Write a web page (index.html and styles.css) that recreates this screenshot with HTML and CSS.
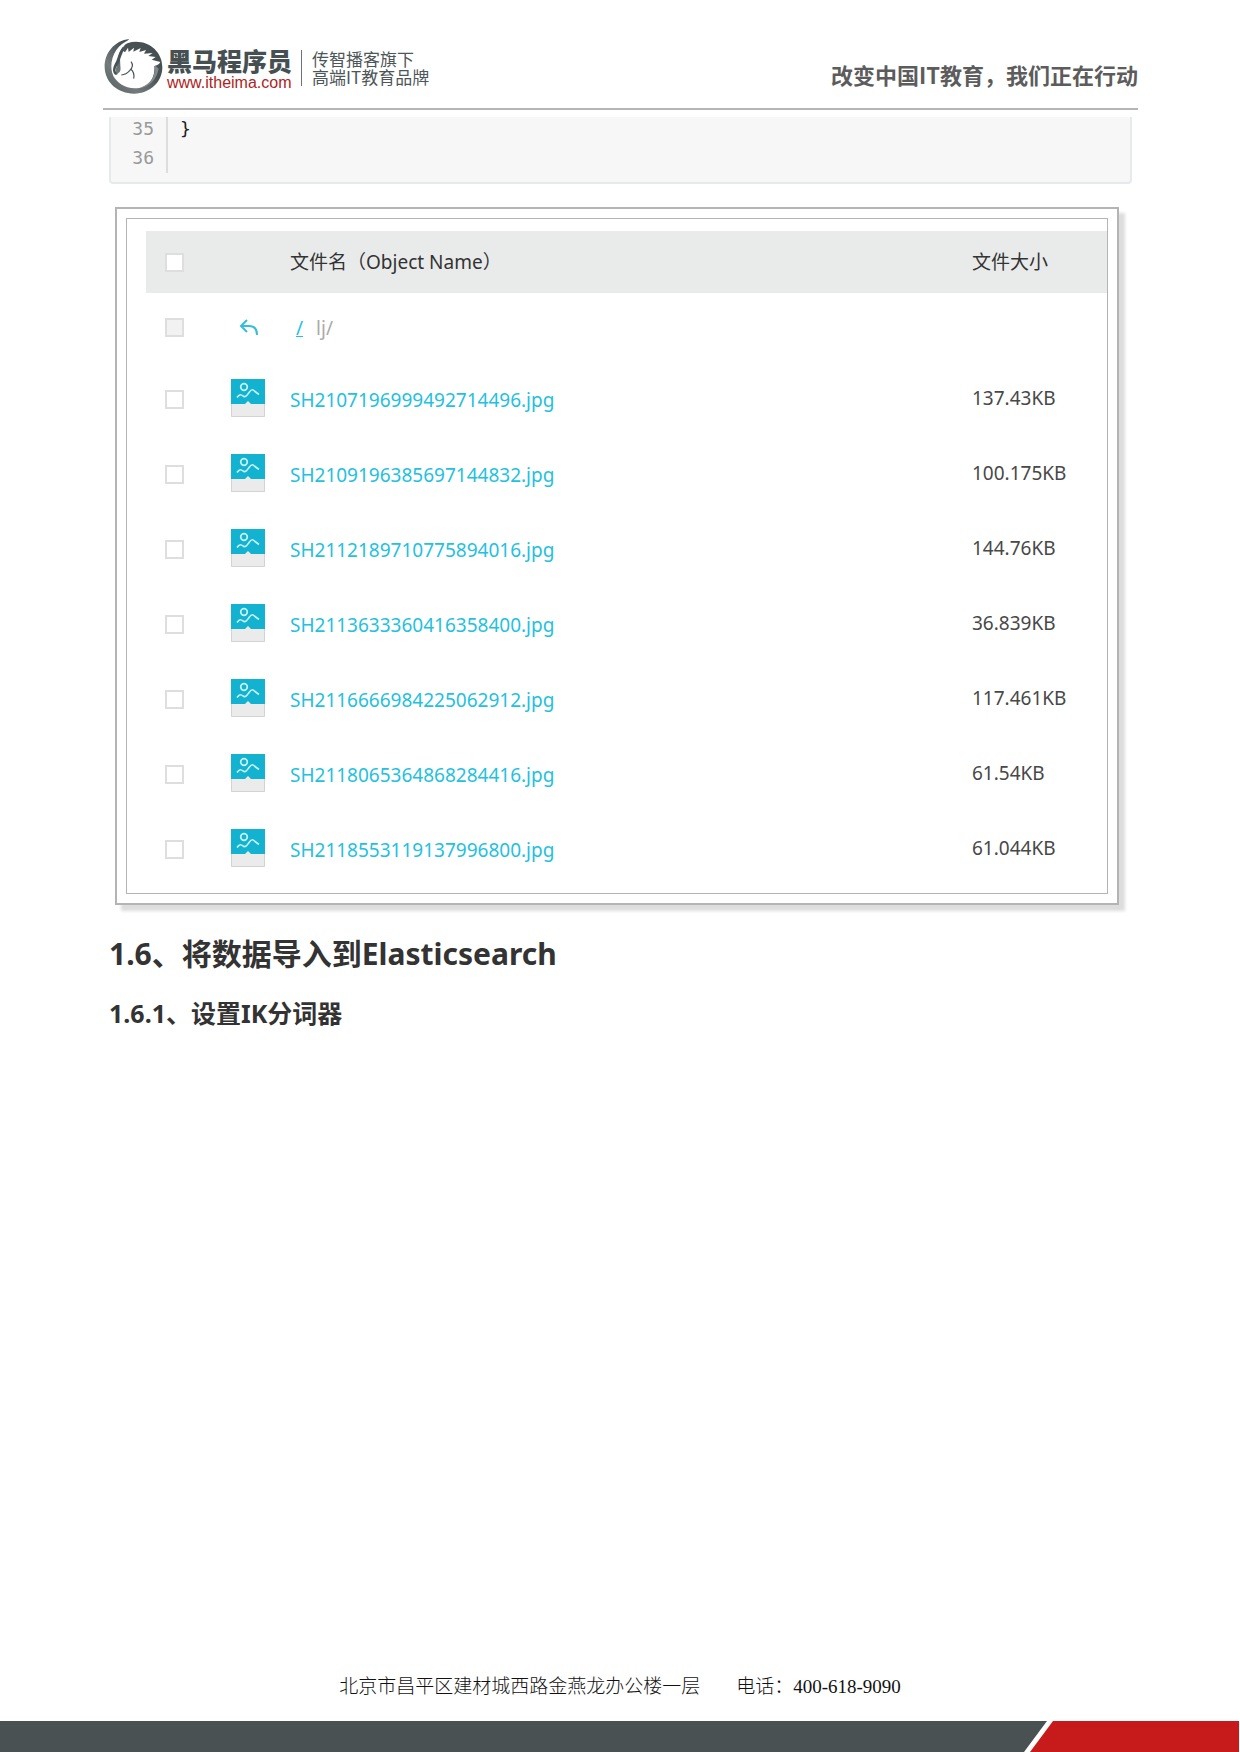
FILE: index.html
```html
<!DOCTYPE html>
<html lang="zh-CN">
<head>
<meta charset="utf-8">
<meta name="viewport" content="width=device-width, initial-scale=1">
<title>将数据导入到Elasticsearch</title>
<link rel="stylesheet" href="styles.css">
</head>
<body>
<svg class="sprite" aria-hidden="true">
  <symbol id="picture" viewBox="0 0 34 38">
    <path fill="#ebebeb" d="M0 24h34v14H0z"/>
    <path fill="none" stroke="#d3d3d3" d="M.5 25v12.500h33V25"/>
    <path fill="#12b2d0" d="M0 0h34v25H0z"/>
    <path fill="#ebebeb" d="M14 25l3-3 3 3z"/>
    <g fill="none" stroke="#c5f1f7" stroke-width="1.700"><circle cx="13" cy="8" r="3.300"/><path d="M6 18.500c3-4 4-3 7-1 2 1 3-1 5-4 3-4 4-3 6-1l4 3"/></g>
  </symbol>
</svg>
<header class="header">
  <div class="brand">
    <svg class="emblem" viewBox="28 23 177 168" role="img" aria-label="黑马程序员">
      <defs><linearGradient id="ring" x1="0" y1="1" x2="1" y2="0"><stop offset="0" stop-color="#50595b"/><stop offset=".3" stop-color="#737b7d"/><stop offset=".6" stop-color="#495254"/><stop offset="1" stop-color="#434d4e"/></linearGradient></defs>
      <path fill="url(#ring)" d="M104 26C59 31 29 68 30 111c1 46 40 79 88 79 49 0 85-36 85-79 0-44-35-77-79-77-17 0-32 5-43 14z"/>
      <path fill="#fff" d="M104 29C72 40 50 72 50 108c0 14 3 24 9 33l9-46c3-20 8-34 20-48z"/>
      <path fill="#fff" d="M76 84l7-24 8 6 9-14 2 13 16-13-2 12 22-11-4 12 20-6-6 11 26-2-13 9 22 3-12 8 26 7c-4 8-11 11-18 12 3 41-20 67-58 67-32 0-55-17-66-39l12-2 4-5c8-4 7-13 6-22z"/>
      <path fill="#495254" d="M84 50c-14 18-13 30-21 46-7 13-12 26-3 36l7-2-5-8 2-11c13-16 13-33 24-52z"/>
      <path fill="none" stroke="#495254" stroke-width="3.500" d="M109 94c8 10 3 20-4 27-7 8-14 12-25 13M108 116c10 8 11 19 9 29"/>
      <path fill="#838a8b" d="M181 105c2 34-13 58-47 68 27-2 52-24 58-58z"/>
    </svg>
    <div class="brand-text">
      <strong class="brand-name">黑马程序员</strong>
      <a class="brand-url" href="#">www.itheima.com</a>
    </div>
    <p class="tagline">传智播客旗下<br>高端IT教育品牌</p>
  </div>
  <p class="slogan">改变中国IT教育，我们正在行动</p>
</header>
<main class="content">
  <div class="code">
    <div class="gutter">35<br>36</div>
    <pre class="source">}</pre>
  </div>
  <figure class="frame">
    <div class="frame-inner">
      <table class="files">
        <colgroup><col class="col-check"><col class="col-icon"><col><col class="col-size"></colgroup>
        <thead>
          <tr><th><input type="checkbox" aria-label="全选"></th><th></th><th>文件名（Object Name）</th><th>文件大小</th></tr>
        </thead>
        <tbody>
          <tr class="up">
            <td><input type="checkbox" aria-label="lj/" disabled></td>
            <td><svg class="back" viewBox="0 0 20 18" aria-hidden="true"><path d="M8 1L2 7l6 6M2 7h8c6 0 8 4 8 9" fill="none" stroke="#35bddb" stroke-width="2"/></svg></td>
            <td class="path"><a href="#">/</a><span>lj/</span></td><td></td>
          </tr>
          <tr><td><input type="checkbox" aria-label="SH2107196999492714496.jpg"></td><td><svg class="picture"><use href="#picture"/></svg></td><td><a href="#">SH2107196999492714496.jpg</a></td><td>137.43KB</td></tr>
          <tr><td><input type="checkbox" aria-label="SH2109196385697144832.jpg"></td><td><svg class="picture"><use href="#picture"/></svg></td><td><a href="#">SH2109196385697144832.jpg</a></td><td>100.175KB</td></tr>
          <tr><td><input type="checkbox" aria-label="SH2112189710775894016.jpg"></td><td><svg class="picture"><use href="#picture"/></svg></td><td><a href="#">SH2112189710775894016.jpg</a></td><td>144.76KB</td></tr>
          <tr><td><input type="checkbox" aria-label="SH2113633360416358400.jpg"></td><td><svg class="picture"><use href="#picture"/></svg></td><td><a href="#">SH2113633360416358400.jpg</a></td><td>36.839KB</td></tr>
          <tr><td><input type="checkbox" aria-label="SH2116666984225062912.jpg"></td><td><svg class="picture"><use href="#picture"/></svg></td><td><a href="#">SH2116666984225062912.jpg</a></td><td>117.461KB</td></tr>
          <tr><td><input type="checkbox" aria-label="SH2118065364868284416.jpg"></td><td><svg class="picture"><use href="#picture"/></svg></td><td><a href="#">SH2118065364868284416.jpg</a></td><td>61.54KB</td></tr>
          <tr><td><input type="checkbox" aria-label="SH2118553119137996800.jpg"></td><td><svg class="picture"><use href="#picture"/></svg></td><td><a href="#">SH2118553119137996800.jpg</a></td><td>61.044KB</td></tr>
        </tbody>
      </table>
    </div>
  </figure>
  <h2>1.6、将数据导入到Elasticsearch</h2>
  <h3>1.6.1、设置IK分词器</h3>
</main>
<footer class="footer">
  <address class="contact"><span>北京市昌平区建材城西路金燕龙办公楼一层</span><span>电话：400-618-9090</span></address>
  <div class="bar"><div class="bar-dark"></div><div class="bar-red"></div></div>
</footer>
</body>
</html>
```

FILE: styles.css
```css
* { box-sizing: border-box; }
body {
  margin: 0;
  min-height: 100vh;
  display: flex;
  flex-direction: column;
  background: #fff;
  color: #333;
  font-family: "Noto Sans", "Noto Sans CJK SC", sans-serif;
}
p, h2, h3, figure, pre { margin: 0; }
a { text-decoration: none; }
.sprite { position: absolute; width: 0; height: 0; }

.header {
  display: flex;
  justify-content: space-between;
  align-items: flex-start;
  height: 110px;
  margin: 0 102px 0 103px;
  padding-top: 38px;
  border-bottom: 2px solid #b5b5b5;
  font-family: "Noto Sans CJK SC", sans-serif;
}
.brand { display: flex; align-items: flex-start; padding-left: 1px; }
.emblem { width: 59px; height: 56px; margin-right: 4px; }
.brand-text { display: flex; flex-direction: column; padding-top: 8px; }
.brand-name { font-size: 25px; line-height: 28px; font-weight: 900; color: #465052; }
.brand-url {
  font-family: "Liberation Sans", sans-serif;
  font-size: 16px;
  line-height: 18px;
  color: #ae2421;
}
.tagline {
  margin: 12px 0 0 9px;
  padding-left: 10px;
  border-left: 1px solid #6b7375;
  font-size: 17px;
  line-height: 18px;
  font-weight: 400;
  color: #4d5658;
}
.slogan {
  padding-top: 20px;
  font-size: 22px;
  line-height: 32px;
  font-weight: 700;
  color: #5c5c5c;
}

.content { margin: 7px 108px 0 109px; }
.code {
  display: flex;
  height: 67px;
  padding-bottom: 10px;
  border: 2px solid #e7eaed;
  border-top: 0;
  border-radius: 0 0 4px 4px;
  background: #f7f7f7;
  font-family: "DejaVu Sans Mono", monospace;
  font-size: 18px;
  line-height: 29px;
  overflow: hidden;
}
.gutter {
  width: 57px;
  height: 59px;
  margin-top: -3px;
  padding-right: 12px;
  border-right: 2px solid #ddd;
  text-align: right;
  color: #999;
}
.source { margin: -3px 0 0 12px; font: inherit; color: #222; }

.frame {
  margin: 23px 13px 0 6px;
  padding: 9px;
  border: 2px solid #b4b4b4;
  background: #fff;
  box-shadow: 6px 6px 3px #ddd;
}
.frame-inner { padding: 12px 0 6px 19px; border: 1px solid #b4b4b4; }
.files {
  width: 100%;
  table-layout: fixed;
  border-collapse: collapse;
  font-size: 19px;
  line-height: 26px;
}
.col-check { width: 85px; }
.col-icon { width: 59px; }
.col-size { width: 135px; }
th, td { padding: 0; text-align: left; vertical-align: middle; font-weight: 400; }
th { height: 62px; background: #e9ebeb; }
td { height: 75px; }
.up td { height: 69px; }
td:last-child { padding-bottom: 3px; color: #484848; }
td a { color: #25bfe0; }
.path a { margin: 0 13px 0 6px; text-decoration: underline; }
.path span { color: #aaa; }
th:first-child, td:first-child { padding-left: 19px; }
input {
  display: block;
  appearance: none;
  width: 19px;
  height: 19px;
  margin: 0;
  border: 2px solid #dedede;
  background: #fff;
}
input:disabled { background: #f2f2f2; }
.picture { display: block; width: 34px; height: 38px; margin-bottom: 3px; }
.back { display: block; width: 20px; height: 18px; margin-left: 8px; }

h2, h3 { color: #333; font-weight: 700; }
h2 { margin-top: 28px; font-size: 30px; line-height: 42px; }
h3 { margin-top: 20px; font-size: 25px; line-height: 36px; }

.footer { margin-top: auto; }
.contact {
  display: flex;
  justify-content: center;
  gap: 36px;
  margin-bottom: 20px;
  font-family: "Liberation Serif", "Noto Sans CJK SC", serif;
  font-size: 19px;
  line-height: 28px;
  font-style: normal;
  font-weight: 300;
  color: #111;
}
.bar { display: flex; height: 31px; padding-right: 1px; }
.bar-dark { flex: 1; background: #495152; clip-path: polygon(0 0, 100% 0, calc(100% - 23px) 100%, 0 100%); }
.bar-red { width: 209px; margin-left: -17px; background: #c71a1b; clip-path: polygon(23px 0, 100% 0, 100% 100%, 0 100%); }
```
